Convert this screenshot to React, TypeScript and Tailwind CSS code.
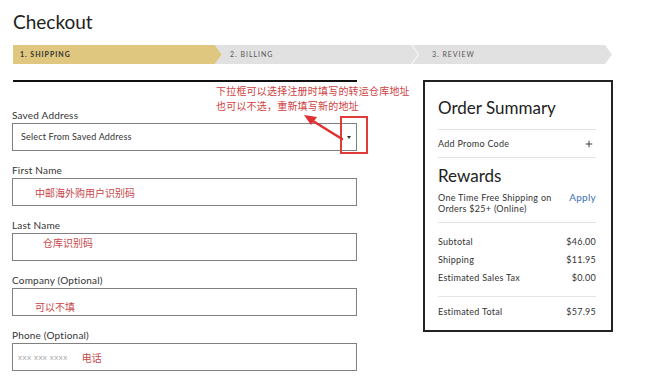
import { Plus } from "lucide-react";

const steps = [
  { label: "1. SHIPPING", active: true },
  { label: "2. BILLING", active: false },
  { label: "3. REVIEW", active: false },
];

function Field({ label, children }: { label: string; children?: React.ReactNode }) {
  return (
    <div className="flex flex-col">
      <div className="text-[10px] leading-[12px] tracking-[0.02em] text-[#333] mb-[2px]">{label}</div>
      <div className="h-[28px] border border-[#808080] flex items-center relative">{children}</div>
    </div>
  );
}

function Row({ label, value }: { label: string; value: string }) {
  return (
    <div className="flex justify-between items-center h-[18px] text-[9px] tracking-[0.03em] text-[#333]">
      <span>{label}</span>
      <span>{value}</span>
    </div>
  );
}

export default function App() {
  const cjk = "font-['Noto_Sans_CJK_SC',sans-serif]";
  return (
    <div className="relative w-[660px] h-[376px] overflow-hidden bg-white font-['Lato','Noto_Sans_CJK_SC',sans-serif] text-[#222]">
      <div className="pl-[13px] pt-[10px]">
        <h1 className="text-[19px] leading-[24px] font-normal text-[#222]">Checkout</h1>

        {/* step bar */}
        <div className="flex mt-[11px] h-[19px] w-[600px]">
          <div className="w-[209px] bg-[#dfc77f] flex items-center pl-[7px] [clip-path:polygon(0_0,calc(100%_-_7px)_0,100%_50%,calc(100%_-_7px)_100%,0_100%)]">
            <span className="text-[7px] font-bold tracking-[0.14em] text-[#333]">{steps[0].label}</span>
          </div>
          <div className="w-[203px] -ml-[7px] bg-[#e1e1e1] flex items-center pl-[15px] [clip-path:polygon(0_0,calc(100%_-_7px)_0,100%_50%,calc(100%_-_7px)_100%,0_100%,7px_50%)]">
            <span className="text-[7px] tracking-[0.14em] text-[#555]">{steps[1].label}</span>
          </div>
          <div className="w-[200px] -ml-[6px] bg-[#e1e1e1] flex items-center pl-[20px] [clip-path:polygon(0_0,calc(100%_-_7px)_0,100%_50%,calc(100%_-_7px)_100%,0_100%,7px_50%)]">
            <span className="text-[7px] tracking-[0.14em] text-[#555]">{steps[2].label}</span>
          </div>
        </div>

        <div className="flex mt-[16px]">
          {/* form column */}
          <div className="w-[345px] -ml-[1px]">
            <div className="h-[2px] bg-[#111] ml-[1px]" />
            <div className="mt-[27px] flex flex-col gap-[13px]">
              <Field label="Saved Address">
                <span className="pl-[8px] text-[9px] tracking-[0.02em] text-[#333]">Select From Saved Address</span>
                <span className="absolute right-[5px] top-[12px] w-0 h-0 border-l-[2.5px] border-r-[2.5px] border-t-[3px] border-l-transparent border-r-transparent border-t-[#333]" />
              </Field>
              <Field label="First Name">
                <span className={`pl-[22px] text-[10px] text-[#c8464a] ${cjk}`}>中邮海外购用户识别码</span>
              </Field>
              <Field label="Last Name">
                <span className={`pl-[30px] text-[10px] text-[#c8464a] self-start mt-[1px] ${cjk}`}>仓库识别码</span>
              </Field>
              <Field label="Company (Optional)">
                <span className={`pl-[22px] text-[10px] text-[#c8464a] self-end mb-[1px] ${cjk}`}>可以不填</span>
              </Field>
              <Field label="Phone (Optional)">
                <span className="pl-[5px] text-[8px] tracking-[0.06em] text-[#aaa]">xxx xxx xxxx</span>
                <span className={`ml-[14px] text-[10px] text-[#c8464a] ${cjk}`}>电话</span>
              </Field>
            </div>
          </div>

          {/* order summary */}
          <div className="ml-[66px] w-[190px] h-[252px] border-2 border-[#222] pl-[13px] pr-[15px] pt-[16px]">
            <div className="text-[17px] leading-[20px] text-[#222]">Order Summary</div>
            <div className="mt-[11px] h-px bg-[#e4e4e4]" />
            <div className="h-[27px] flex items-center justify-between text-[9px] tracking-[0.03em] text-[#333]">
              <span>Add Promo Code</span>
              <Plus className="w-[10px] h-[10px] mr-[2px] text-[#222]" strokeWidth={2} />
            </div>
            <div className="h-px bg-[#e4e4e4]" />
            <div className="mt-[8px] text-[17px] leading-[20px] text-[#222]">Rewards</div>
            <div className="mt-[6px] flex justify-between text-[9px] leading-[11px] tracking-[0.03em] text-[#333]">
              <span>
                One Time Free Shipping on
                <br />
                Orders $25+ (Online)
              </span>
              <span className="text-[#3d6fb6] text-[10px]">Apply</span>
            </div>
            <div className="mt-[8px] h-px bg-[#e4e4e4]" />
            <div className="mt-[10px]">
              <Row label="Subtotal" value="$46.00" />
              <Row label="Shipping" value="$11.95" />
              <Row label="Estimated Sales Tax" value="$0.00" />
            </div>
            <div className="mt-[9px] h-px bg-[#e4e4e4]" />
            <div className="mt-[6px]">
              <Row label="Estimated Total" value="$57.95" />
            </div>
          </div>
        </div>
      </div>

      {/* annotation overlay */}
      <div className={`absolute left-[216px] top-[83px] text-[10px] leading-[15px] tracking-[0.02em] text-[#cf3f3f] ${cjk}`}>
        下拉框可以选择注册时填写的转运仓库地址
        <br />
        也可以不选，重新填写新的地址
      </div>
      <div className="absolute left-[340px] top-[116px] w-[28px] h-[38px] border-2 border-[#e03a3a]" />
      <svg className="absolute left-0 top-0" width="660" height="376" viewBox="0 0 660 376">
        <path d="M342 139 L313 121" stroke="#e03030" strokeWidth="2.5" strokeLinecap="round" />
        <polygon points="304,115 317,117 311,125" fill="#e03030" />
      </svg>
    </div>
  );
}
